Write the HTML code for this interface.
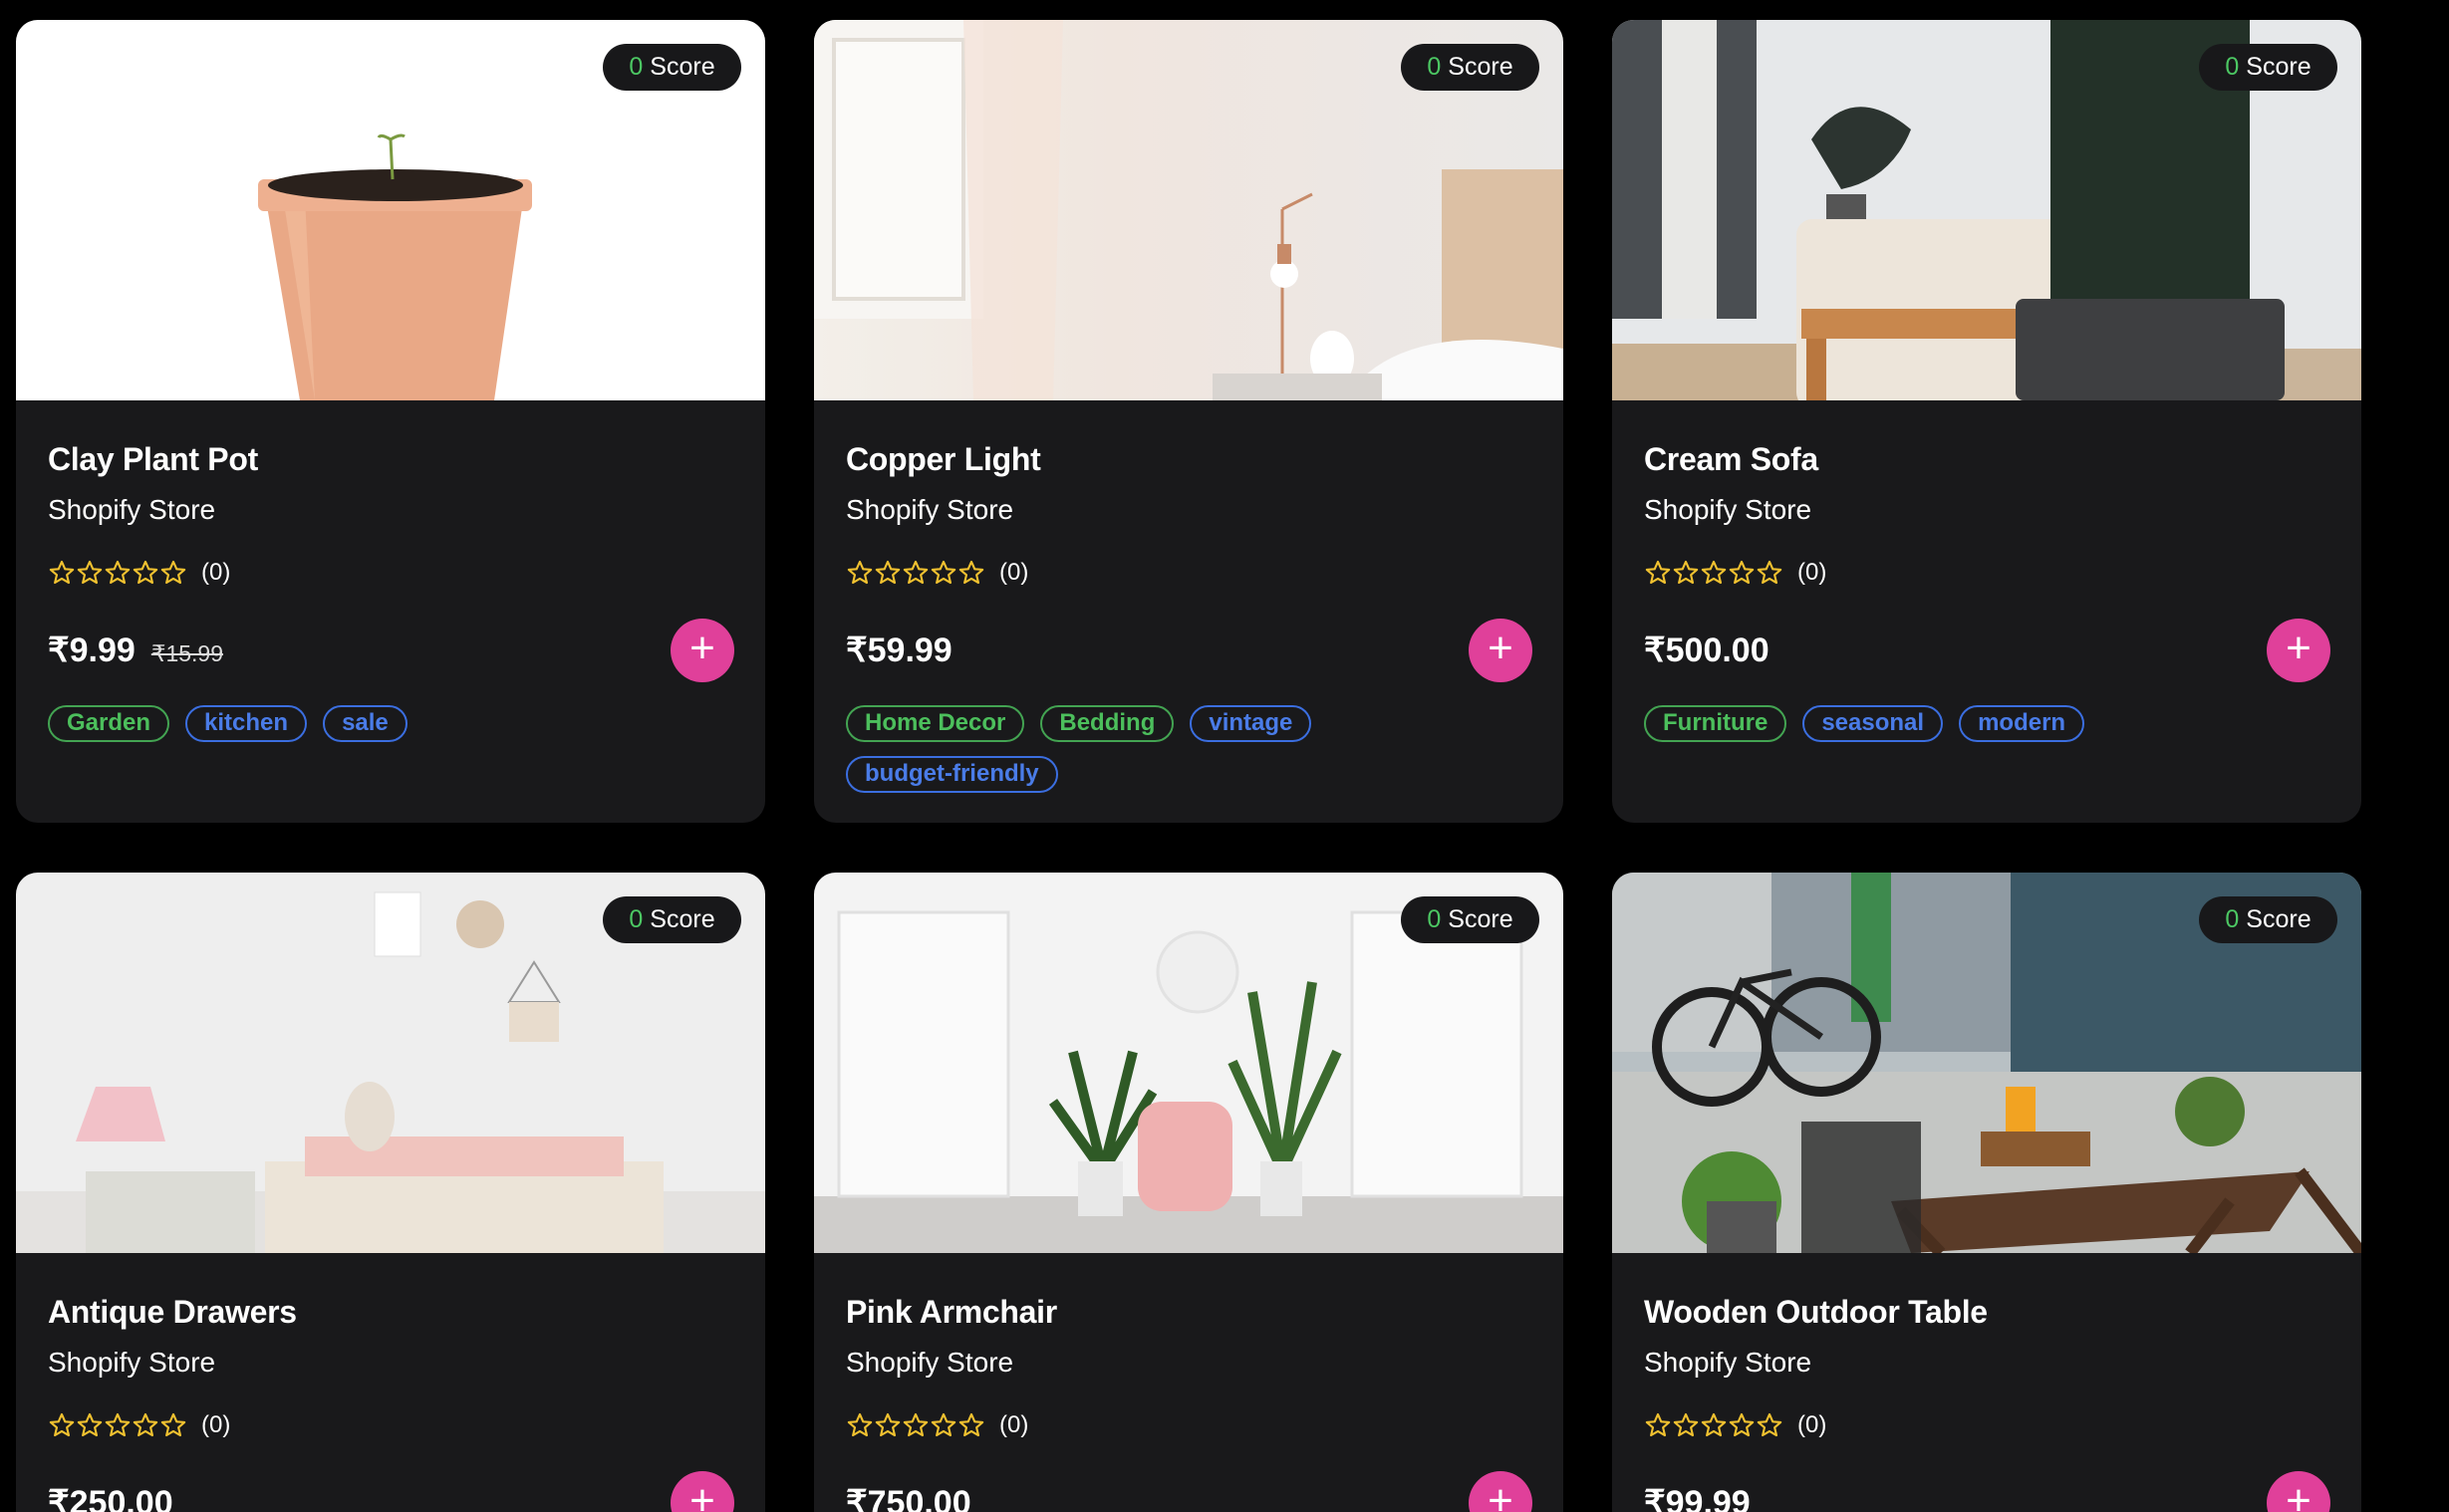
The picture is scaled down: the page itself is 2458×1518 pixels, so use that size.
<!DOCTYPE html>
<html><head><meta charset="utf-8"><style>
*{margin:0;padding:0;box-sizing:border-box}
html{width:2458px;height:1518px;overflow:hidden;background:#000}
body{width:2458px;height:1518px;background:#000;overflow:hidden;font-family:"Liberation Sans",sans-serif;position:relative}
.card{position:absolute;width:752px;height:806px;background:#19191b;border-radius:22px;overflow:hidden}
.img{position:absolute;left:0;top:0;width:752px;height:382px;overflow:hidden}
.img svg{display:block}
.badge{position:absolute;left:589px;top:24px;width:139px;height:47px;border-radius:24px;background:#18181a;color:#fff;font-size:25px;line-height:47px;text-align:center}
.badge b{color:#4cc763;font-weight:normal;margin-right:7px}
.t{position:absolute;left:32px;color:#fff;white-space:nowrap}
.title{top:420px;font-size:32px;font-weight:bold;line-height:42px;letter-spacing:-0.3px}
.store{top:474px;font-size:28px;line-height:36px}
.stars{top:538px;height:34px;display:flex;align-items:center;gap:0}
.stars span{color:#fff;font-size:24px;margin-left:14px}
.price{top:612px;font-size:34px;font-weight:bold;line-height:42px}
.price s{font-size:23px;font-weight:normal;margin-left:16px;color:#ddd}
.plus{position:absolute;left:657px;top:601px;width:64px;height:64px;border-radius:50%;background:#e0409a;color:#fff;font-size:44px;line-height:60px;text-align:center}
.tags{position:absolute;left:32px;top:688px;width:640px;display:flex;flex-wrap:wrap;gap:14px 16px}
.tag{height:37px;border:2.5px solid;border-radius:19px;padding:0 17px;font-size:24px;line-height:32px;font-weight:bold}
.g{color:#4cbf5c;border-color:#43a452}
.b{color:#4a7ce8;border-color:#3b6ee0}
</style></head><body>

<svg width="0" height="0" style="position:absolute"><defs><symbol id="st" viewBox="0 0 24 24"><path d="M12 2.5l2.8 6.3 6.8.6-5.2 4.5 1.6 6.7L12 17.1l-5.9 3.5 1.6-6.7L2.4 9.4l6.8-.6z" fill="none" stroke="#f2c230" stroke-width="1.8" stroke-linejoin="round"/></symbol></defs></svg>

<div class="card" style="left:16px;top:20px">
 <div class="img"><svg width="752" height="382" viewBox="0 0 752 382">
  <rect width="752" height="382" fill="#fff"/>
  <path d="M250 175 L285 382 L480 382 L510 175 Z" fill="#e9a886"/>
  <path d="M300 382 L268 178 L290 178 Z" fill="#f3c0a0" opacity=".6"/>
  <rect x="243" y="160" width="275" height="32" rx="6" fill="#eeb090"/>
  <ellipse cx="381" cy="166" rx="128" ry="16" fill="#2a211c"/>
  <path d="M378 160 L376 120 M376 120 q-10 -6 -12 -2 M376 120 q10 -6 14 -3" stroke="#7a9a40" stroke-width="3" fill="none"/>
 </svg></div>
 <div class="badge"><b>0</b>Score</div>
 <div class="t title">Clay Plant Pot</div>
 <div class="t store">Shopify Store</div>
 <div class="t stars"><svg width="140" height="28"><use href="#st" x="0" width="28" height="28"/><use href="#st" x="28" width="28" height="28"/><use href="#st" x="56" width="28" height="28"/><use href="#st" x="84" width="28" height="28"/><use href="#st" x="112" width="28" height="28"/></svg><span>(0)</span></div>
 <div class="t price">₹9.99<s>₹15.99</s></div>
 <div class="plus">+</div>
 <div class="tags"><div class="tag g">Garden</div><div class="tag b">kitchen</div><div class="tag b">sale</div></div>
</div>

<div class="card" style="left:817px;top:20px">
 <div class="img"><svg width="752" height="382" viewBox="0 0 752 382">
  <defs><linearGradient id="w2" x1="0" x2="1"><stop offset="0" stop-color="#f3efe9"/><stop offset=".4" stop-color="#f0e6df"/><stop offset="1" stop-color="#eae8e7"/></linearGradient></defs>
  <rect width="752" height="382" fill="url(#w2)"/>
  <rect x="0" y="0" width="170" height="300" fill="#f7f5f2"/>
  <rect x="20" y="20" width="130" height="260" fill="#fbfaf8" stroke="#e2ddd6" stroke-width="4"/>
  <path d="M150 0 L250 0 L240 382 L160 382 Z" fill="#f4e3da" opacity=".8"/>
  <rect x="630" y="150" width="122" height="232" fill="#dcc0a4"/>
  <path d="M540 370 Q600 300 752 330 L752 382 L540 382Z" fill="#fafafa"/>
  <line x1="470" y1="190" x2="470" y2="360" stroke="#c78a68" stroke-width="3"/>
  <line x1="470" y1="190" x2="500" y2="175" stroke="#c78a68" stroke-width="3"/>
  <circle cx="472" cy="255" r="14" fill="#fff"/><rect x="465" y="225" width="14" height="20" fill="#c78a68"/>
  <ellipse cx="520" cy="340" rx="22" ry="28" fill="#fff"/>
  <rect x="400" y="355" width="170" height="27" fill="#d8d4d0"/>
 </svg></div>
 <div class="badge"><b>0</b>Score</div>
 <div class="t title">Copper Light</div>
 <div class="t store">Shopify Store</div>
 <div class="t stars"><svg width="140" height="28"><use href="#st" x="0" width="28" height="28"/><use href="#st" x="28" width="28" height="28"/><use href="#st" x="56" width="28" height="28"/><use href="#st" x="84" width="28" height="28"/><use href="#st" x="112" width="28" height="28"/></svg><span>(0)</span></div>
 <div class="t price">₹59.99</div>
 <div class="plus">+</div>
 <div class="tags"><div class="tag g">Home Decor</div><div class="tag g">Bedding</div><div class="tag b">vintage</div><div class="tag b">budget-friendly</div></div>
</div>

<div class="card" style="left:1618px;top:20px">
 <div class="img"><svg width="752" height="382" viewBox="0 0 752 382">
  <rect width="752" height="382" fill="#e6e8ea"/>
  <rect x="0" y="0" width="145" height="300" fill="#4a4e52"/>
  <rect x="50" y="0" width="55" height="300" fill="#e8e8e6"/>
  <rect x="0" y="330" width="752" height="52" fill="#c9b49a"/>
  <rect x="0" y="325" width="420" height="57" fill="#c8b092"/>
  <path d="M200 120 Q240 60 300 110 Q280 160 230 170 Z" fill="#2c3430"/>
  <rect x="215" y="175" width="40" height="50" fill="#555"/>
  <rect x="185" y="200" width="280" height="190" rx="16" fill="#ede5da"/>
  <rect x="190" y="290" width="260" height="30" fill="#c8874d"/>
  <rect x="195" y="320" width="20" height="62" fill="#b9773f"/>
  <rect x="440" y="0" width="200" height="360" fill="#233128"/>
  <rect x="405" y="280" width="270" height="102" rx="8" fill="#3e3f41"/>
 </svg></div>
 <div class="badge"><b>0</b>Score</div>
 <div class="t title">Cream Sofa</div>
 <div class="t store">Shopify Store</div>
 <div class="t stars"><svg width="140" height="28"><use href="#st" x="0" width="28" height="28"/><use href="#st" x="28" width="28" height="28"/><use href="#st" x="56" width="28" height="28"/><use href="#st" x="84" width="28" height="28"/><use href="#st" x="112" width="28" height="28"/></svg><span>(0)</span></div>
 <div class="t price">₹500.00</div>
 <div class="plus">+</div>
 <div class="tags"><div class="tag g">Furniture</div><div class="tag b">seasonal</div><div class="tag b">modern</div></div>
</div>

<div class="card" style="left:16px;top:876px">
 <div class="img"><svg width="752" height="382" viewBox="0 0 752 382">
  <rect width="752" height="382" fill="#eeeeee"/>
  <rect x="0" y="320" width="752" height="62" fill="#e4e2e0"/>
  <rect x="360" y="20" width="46" height="64" fill="#fff" stroke="#ddd"/>
  <circle cx="466" cy="52" r="24" fill="#d9c6b0"/>
  <path d="M495 130 L520 90 L545 130 Z" fill="none" stroke="#999" stroke-width="2"/>
  <rect x="495" y="130" width="50" height="40" fill="#e8dccd"/>
  <path d="M60 270 L80 215 L135 215 L150 270 Z" fill="#f2c1c8"/>
  <rect x="70" y="300" width="170" height="82" fill="#dcdcd6"/>
  <rect x="250" y="290" width="400" height="92" fill="#ece4d8"/>
  <rect x="290" y="265" width="320" height="40" fill="#f0c4be"/>
  <ellipse cx="355" cy="245" rx="25" ry="35" fill="#e6ddd2"/>
 </svg></div>
 <div class="badge"><b>0</b>Score</div>
 <div class="t title">Antique Drawers</div>
 <div class="t store">Shopify Store</div>
 <div class="t stars"><svg width="140" height="28"><use href="#st" x="0" width="28" height="28"/><use href="#st" x="28" width="28" height="28"/><use href="#st" x="56" width="28" height="28"/><use href="#st" x="84" width="28" height="28"/><use href="#st" x="112" width="28" height="28"/></svg><span>(0)</span></div>
 <div class="t price">₹250.00</div>
 <div class="plus">+</div>
</div>

<div class="card" style="left:817px;top:876px">
 <div class="img"><svg width="752" height="382" viewBox="0 0 752 382">
  <rect width="752" height="382" fill="#f3f3f3"/>
  <rect x="0" y="325" width="752" height="57" fill="#cfcdcb"/>
  <rect x="25" y="40" width="170" height="285" fill="#fafafa" stroke="#e0e0e0" stroke-width="3"/>
  <rect x="540" y="40" width="170" height="285" fill="#fafafa" stroke="#e0e0e0" stroke-width="3"/>
  <circle cx="385" cy="100" r="40" fill="#efefef" stroke="#e2e2e2" stroke-width="3"/>
  <path d="M290 300 L260 180 M290 300 L320 180 M290 300 L240 230 M290 300 L340 220" stroke="#2f5a26" stroke-width="10"/>
  <rect x="265" y="290" width="45" height="55" fill="#e8e8e8"/>
  <path d="M470 300 L440 120 M470 300 L500 110 M470 300 L420 190 M470 300 L525 180" stroke="#3b6a2e" stroke-width="10"/>
  <rect x="448" y="290" width="42" height="55" fill="#e8e8e8"/>
  <rect x="325" y="230" width="95" height="110" rx="24" fill="#efb0b0"/>
 </svg></div>
 <div class="badge"><b>0</b>Score</div>
 <div class="t title">Pink Armchair</div>
 <div class="t store">Shopify Store</div>
 <div class="t stars"><svg width="140" height="28"><use href="#st" x="0" width="28" height="28"/><use href="#st" x="28" width="28" height="28"/><use href="#st" x="56" width="28" height="28"/><use href="#st" x="84" width="28" height="28"/><use href="#st" x="112" width="28" height="28"/></svg><span>(0)</span></div>
 <div class="t price">₹750.00</div>
 <div class="plus">+</div>
</div>

<div class="card" style="left:1618px;top:876px">
 <div class="img"><svg width="752" height="382" viewBox="0 0 752 382">
  <rect width="752" height="382" fill="#b8c0c4"/>
  <rect x="0" y="0" width="160" height="180" fill="#c6cacb"/>
  <rect x="160" y="0" width="250" height="180" fill="#8f9aa2"/>
  <rect x="400" y="0" width="352" height="230" fill="#3c5866"/>
  <rect x="240" y="0" width="40" height="150" fill="#3e8a4e"/>
  <rect x="0" y="200" width="752" height="182" fill="#c4c6c4"/>
  <circle cx="100" cy="175" r="55" fill="none" stroke="#1e1e1e" stroke-width="10"/>
  <circle cx="210" cy="165" r="55" fill="none" stroke="#1e1e1e" stroke-width="10"/>
  <path d="M100 175 L130 110 L210 165 M130 110 L180 100" stroke="#222" stroke-width="7" fill="none"/>
  <path d="M280 330 L700 300 L660 360 L300 382 Z" fill="#5a3b28"/>
  <path d="M290 340 L330 382 M620 330 L580 382 M690 300 L752 382" stroke="#4a2f1e" stroke-width="12"/>
  <rect x="190" y="250" width="120" height="140" fill="#2a2a2a" opacity=".8"/>
  <circle cx="120" cy="330" r="50" fill="#4f8a34"/>
  <rect x="95" y="330" width="70" height="52" fill="#555"/>
  <circle cx="600" cy="240" r="35" fill="#4f7a32"/>
  <rect x="370" y="260" width="110" height="35" fill="#8a5a30"/>
  <rect x="395" y="215" width="30" height="45" fill="#f2a322"/>
 </svg></div>
 <div class="badge"><b>0</b>Score</div>
 <div class="t title">Wooden Outdoor Table</div>
 <div class="t store">Shopify Store</div>
 <div class="t stars"><svg width="140" height="28"><use href="#st" x="0" width="28" height="28"/><use href="#st" x="28" width="28" height="28"/><use href="#st" x="56" width="28" height="28"/><use href="#st" x="84" width="28" height="28"/><use href="#st" x="112" width="28" height="28"/></svg><span>(0)</span></div>
 <div class="t price">₹99.99</div>
 <div class="plus">+</div>
</div>

</body></html>
